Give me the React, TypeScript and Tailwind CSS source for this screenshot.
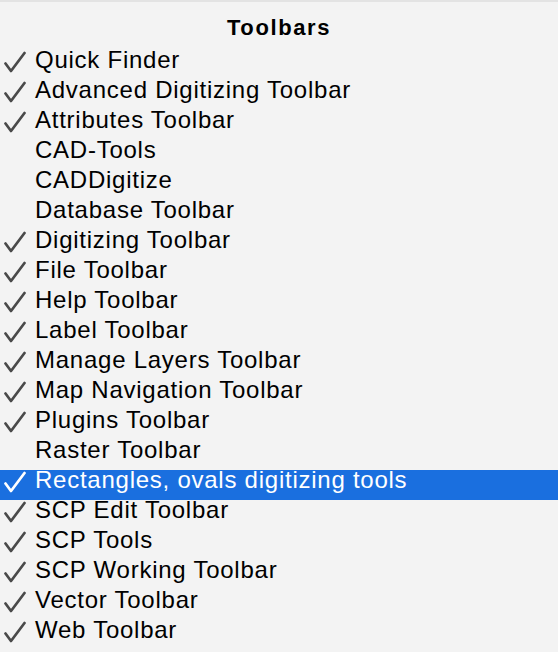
const items: { label: string; checked: boolean; selected?: boolean }[] = [
  { label: "Quick Finder", checked: true },
  { label: "Advanced Digitizing Toolbar", checked: true },
  { label: "Attributes Toolbar", checked: true },
  { label: "CAD-Tools", checked: false },
  { label: "CADDigitize", checked: false },
  { label: "Database Toolbar", checked: false },
  { label: "Digitizing Toolbar", checked: true },
  { label: "File Toolbar", checked: true },
  { label: "Help Toolbar", checked: true },
  { label: "Label Toolbar", checked: true },
  { label: "Manage Layers Toolbar", checked: true },
  { label: "Map Navigation Toolbar", checked: true },
  { label: "Plugins Toolbar", checked: true },
  { label: "Raster Toolbar", checked: false },
  { label: "Rectangles, ovals digitizing tools", checked: true, selected: true },
  { label: "SCP Edit Toolbar", checked: true },
  { label: "SCP Tools", checked: true },
  { label: "SCP Working Toolbar", checked: true },
  { label: "Vector Toolbar", checked: true },
  { label: "Web Toolbar", checked: true },
];

function Check({ white }: { white?: boolean }) {
  return (
    <svg width="22" height="22" viewBox="0 0 22 22" className="mt-[1px] shrink-0">
      <path
        d="M1.5 12.5 L7 20 L20.5 2"
        fill="none"
        stroke={white ? "#ffffff" : "#4a4a4a"}
        strokeWidth="2.7"
        strokeLinecap="round"
        strokeLinejoin="round"
      />
    </svg>
  );
}

export default function App() {
  return (
    <div
      className="w-[558px] h-[652px] bg-[#f3f3f3] border-t-2 border-[#e3e3e3] overflow-hidden"
      style={{ fontFamily: '"Liberation Sans", Arial, sans-serif' }}
    >
      <div className="h-[48px] pt-[15px] text-center text-[22px] leading-[22px] font-bold tracking-[1.6px] text-black">
        Toolbars
      </div>
      <div className="flex flex-col">
        {items.map((it) => (
          <div
            key={it.label}
            className={
              it.selected
                ? "flex h-[30px] items-start pl-[4px] bg-[#1a6fdf] text-white"
                : "flex h-[30px] items-start pl-[4px] text-black"
            }
          >
            {it.checked ? <Check white={it.selected} /> : <div className="w-[22px] shrink-0" />}
            <span className="ml-[9px] text-[24px] leading-[20px] tracking-[0.75px] whitespace-nowrap">
              {it.label}
            </span>
          </div>
        ))}
      </div>
    </div>
  );
}
